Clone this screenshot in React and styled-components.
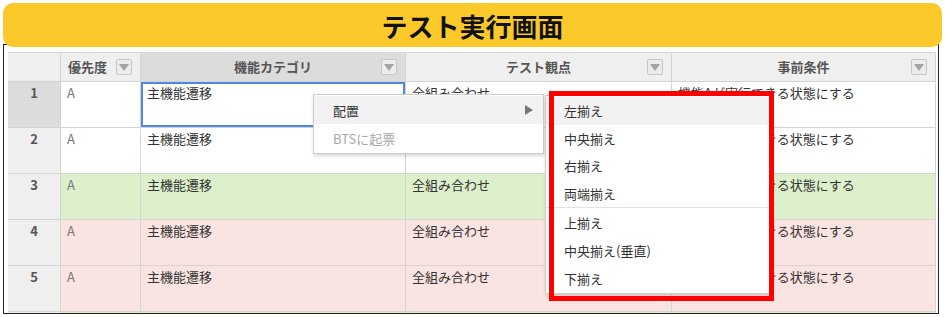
import React from 'react'
import styled, { createGlobalStyle } from 'styled-components'

const GlobalStyle = createGlobalStyle`
  body {
    margin: 0;
    background: #fff;
    font-family: "Noto Sans CJK JP", "Noto Sans", sans-serif;
  }
`

const Page = styled.div`
  position: relative;
  width: 945px;
  height: 317px;
  box-sizing: border-box;
  padding: 3px;
  overflow: hidden;
`

const TitleBar = styled.h1`
  position: relative;
  z-index: 2;
  margin: 0;
  height: 44px;
  background: #fcc92b;
  border-radius: 10px;
  display: flex;
  align-items: center;
  justify-content: center;
  font-size: 26px;
  font-weight: 700;
  color: #111;
`

const Frame = styled.div`
  margin-top: -3px;
  width: 936px;
  height: 270px;
  box-sizing: border-box;
  border: 1px solid #222;
  padding: 7px 2px 0 4px;
  overflow: hidden;
  background: #fff;
`

const Grid = styled.div`
  display: grid;
  grid-template-columns: 53px 80px 265px 266px 1fr;
  grid-template-rows: 29px;
  grid-auto-rows: 46px;
  border-top: 1px solid #d6d6d6;
  font-size: 13px;
  line-height: 18px;
`

const HeadCell = styled.div`
  box-sizing: border-box;
  background: ${p => (p.$active ? '#dcdcdc' : '#efefef')};
  border-right: 1px solid #d4d4d4;
  border-bottom: 1px solid #d4d4d4;
  font-weight: 700;
  color: #555;
  white-space: nowrap;
  display: grid;
  grid-template-columns: 1fr auto 1fr;
  align-items: center;
  padding: 0 8px;
`

const HeadCellLeft = styled(HeadCell)`
  display: flex;
  gap: 9px;
  padding: 0 0 0 7px;
`

const FilterButton = styled.span`
  width: 16px;
  height: 16px;
  box-sizing: border-box;
  border: 1px solid #c6c6c6;
  border-radius: 2px;
  background: #ececec;
  display: flex;
  align-items: center;
  justify-content: center;
  justify-self: end;

  &::after {
    content: '';
    margin-top: 1px;
    border-left: 5px solid transparent;
    border-right: 5px solid transparent;
    border-top: 7px solid #a3a3a3;
  }
`

const RowHead = styled.div`
  box-sizing: border-box;
  background: ${p => (p.$active ? '#dcdcdc' : '#efefef')};
  border-right: 1px solid #d4d4d4;
  border-bottom: 1px solid #d4d4d4;
  font-weight: 700;
  color: #555;
  text-align: center;
  padding-top: 2px;
`

const tones = {
  none: '#ffffff',
  pass: '#ddf0cc',
  fail: '#fae4e2',
}

const Cell = styled.div`
  box-sizing: border-box;
  background: ${p => tones[p.$tone]};
  border-right: 1px solid #d4d4d4;
  border-bottom: 1px solid #d4d4d4;
  padding: 2px 6px;
  color: ${p => (p.$muted ? '#777' : '#333')};
  white-space: nowrap;
  overflow: hidden;
  box-shadow: ${p => (p.$selected ? 'inset 0 0 0 2px #4b89e6' : 'none')};
`

const Menu = styled.div`
  position: absolute;
  z-index: 3;
  left: ${p => p.$left}px;
  top: ${p => p.$top}px;
  width: ${p => p.$width}px;
  box-sizing: border-box;
  padding: 1px 0;
  background: #fff;
  border: 1px solid #cdcdcd;
  box-shadow: 1px 2px 4px rgba(0, 0, 0, 0.16);
  font-size: 13px;
  color: #333;
`

const MenuItem = styled.div`
  height: ${p => p.$h || 28}px;
  display: flex;
  align-items: center;
  justify-content: space-between;
  padding: 0 10px 0 ${p => p.$indent || 18}px;
  background: ${p => (p.$hover ? '#f2f2f2' : 'transparent')};
  color: ${p => (p.$disabled ? '#a8a8a8' : '#333')};
`

const Arrow = styled.span`
  width: 0;
  height: 0;
  border-top: 5px solid transparent;
  border-bottom: 5px solid transparent;
  border-left: 8px solid #777;
`

const Separator = styled.div`
  height: 1px;
  background: #e2e2e2;
`

const Highlight = styled.div`
  position: absolute;
  z-index: 4;
  left: 549px;
  top: 91px;
  width: 225px;
  height: 210px;
  box-sizing: border-box;
  border: 5px solid #f00;
`

const rows = [
  { no: 1, tone: 'none' },
  { no: 2, tone: 'none' },
  { no: 3, tone: 'pass' },
  { no: 4, tone: 'fail' },
  { no: 5, tone: 'fail' },
]

const columns = ['機能カテゴリ', 'テスト観点', '事前条件']

export default function App() {
  return (
    <>
      <GlobalStyle />
      <Page>
        <TitleBar>テスト実行画面</TitleBar>
        <Frame>
          <Grid>
            <HeadCell />
            <HeadCellLeft>
              <span>優先度</span>
              <FilterButton />
            </HeadCellLeft>
            {columns.map((c, i) => (
              <HeadCell key={c} $active={i === 0}>
                <span />
                <span>{c}</span>
                <FilterButton />
              </HeadCell>
            ))}
            {rows.map(r => (
              <React.Fragment key={r.no}>
                <RowHead $active={r.no === 1}>{r.no}</RowHead>
                <Cell $tone={r.tone} $muted>A</Cell>
                <Cell $tone={r.tone} $selected={r.no === 1}>主機能遷移</Cell>
                <Cell $tone={r.tone}>全組み合わせ</Cell>
                <Cell $tone={r.tone}>機能Aが実行できる状態にする</Cell>
              </React.Fragment>
            ))}
            {/* next row, only its top edge shows under the frame */}
            <RowHead />
            <Cell $tone="pass" />
            <Cell $tone="pass" />
            <Cell $tone="pass" />
            <Cell $tone="pass" />
          </Grid>
        </Frame>

        <Menu $left={313} $top={94} $width={231}>
          <MenuItem $hover $indent={19}>
            <span>配置</span>
            <Arrow />
          </MenuItem>
          <MenuItem $disabled $indent={19}>BTSに起票</MenuItem>
        </Menu>

        <Menu $left={545} $top={95} $width={226}>
          <MenuItem $h={27.5} $hover>左揃え</MenuItem>
          <MenuItem $h={27.5}>中央揃え</MenuItem>
          <MenuItem $h={27.5}>右揃え</MenuItem>
          <MenuItem $h={27.5}>両端揃え</MenuItem>
          <Separator />
          <MenuItem $h={28}>上揃え</MenuItem>
          <MenuItem $h={28}>中央揃え(垂直)</MenuItem>
          <MenuItem $h={28}>下揃え</MenuItem>
        </Menu>

        <Highlight />
      </Page>
    </>
  )
}
